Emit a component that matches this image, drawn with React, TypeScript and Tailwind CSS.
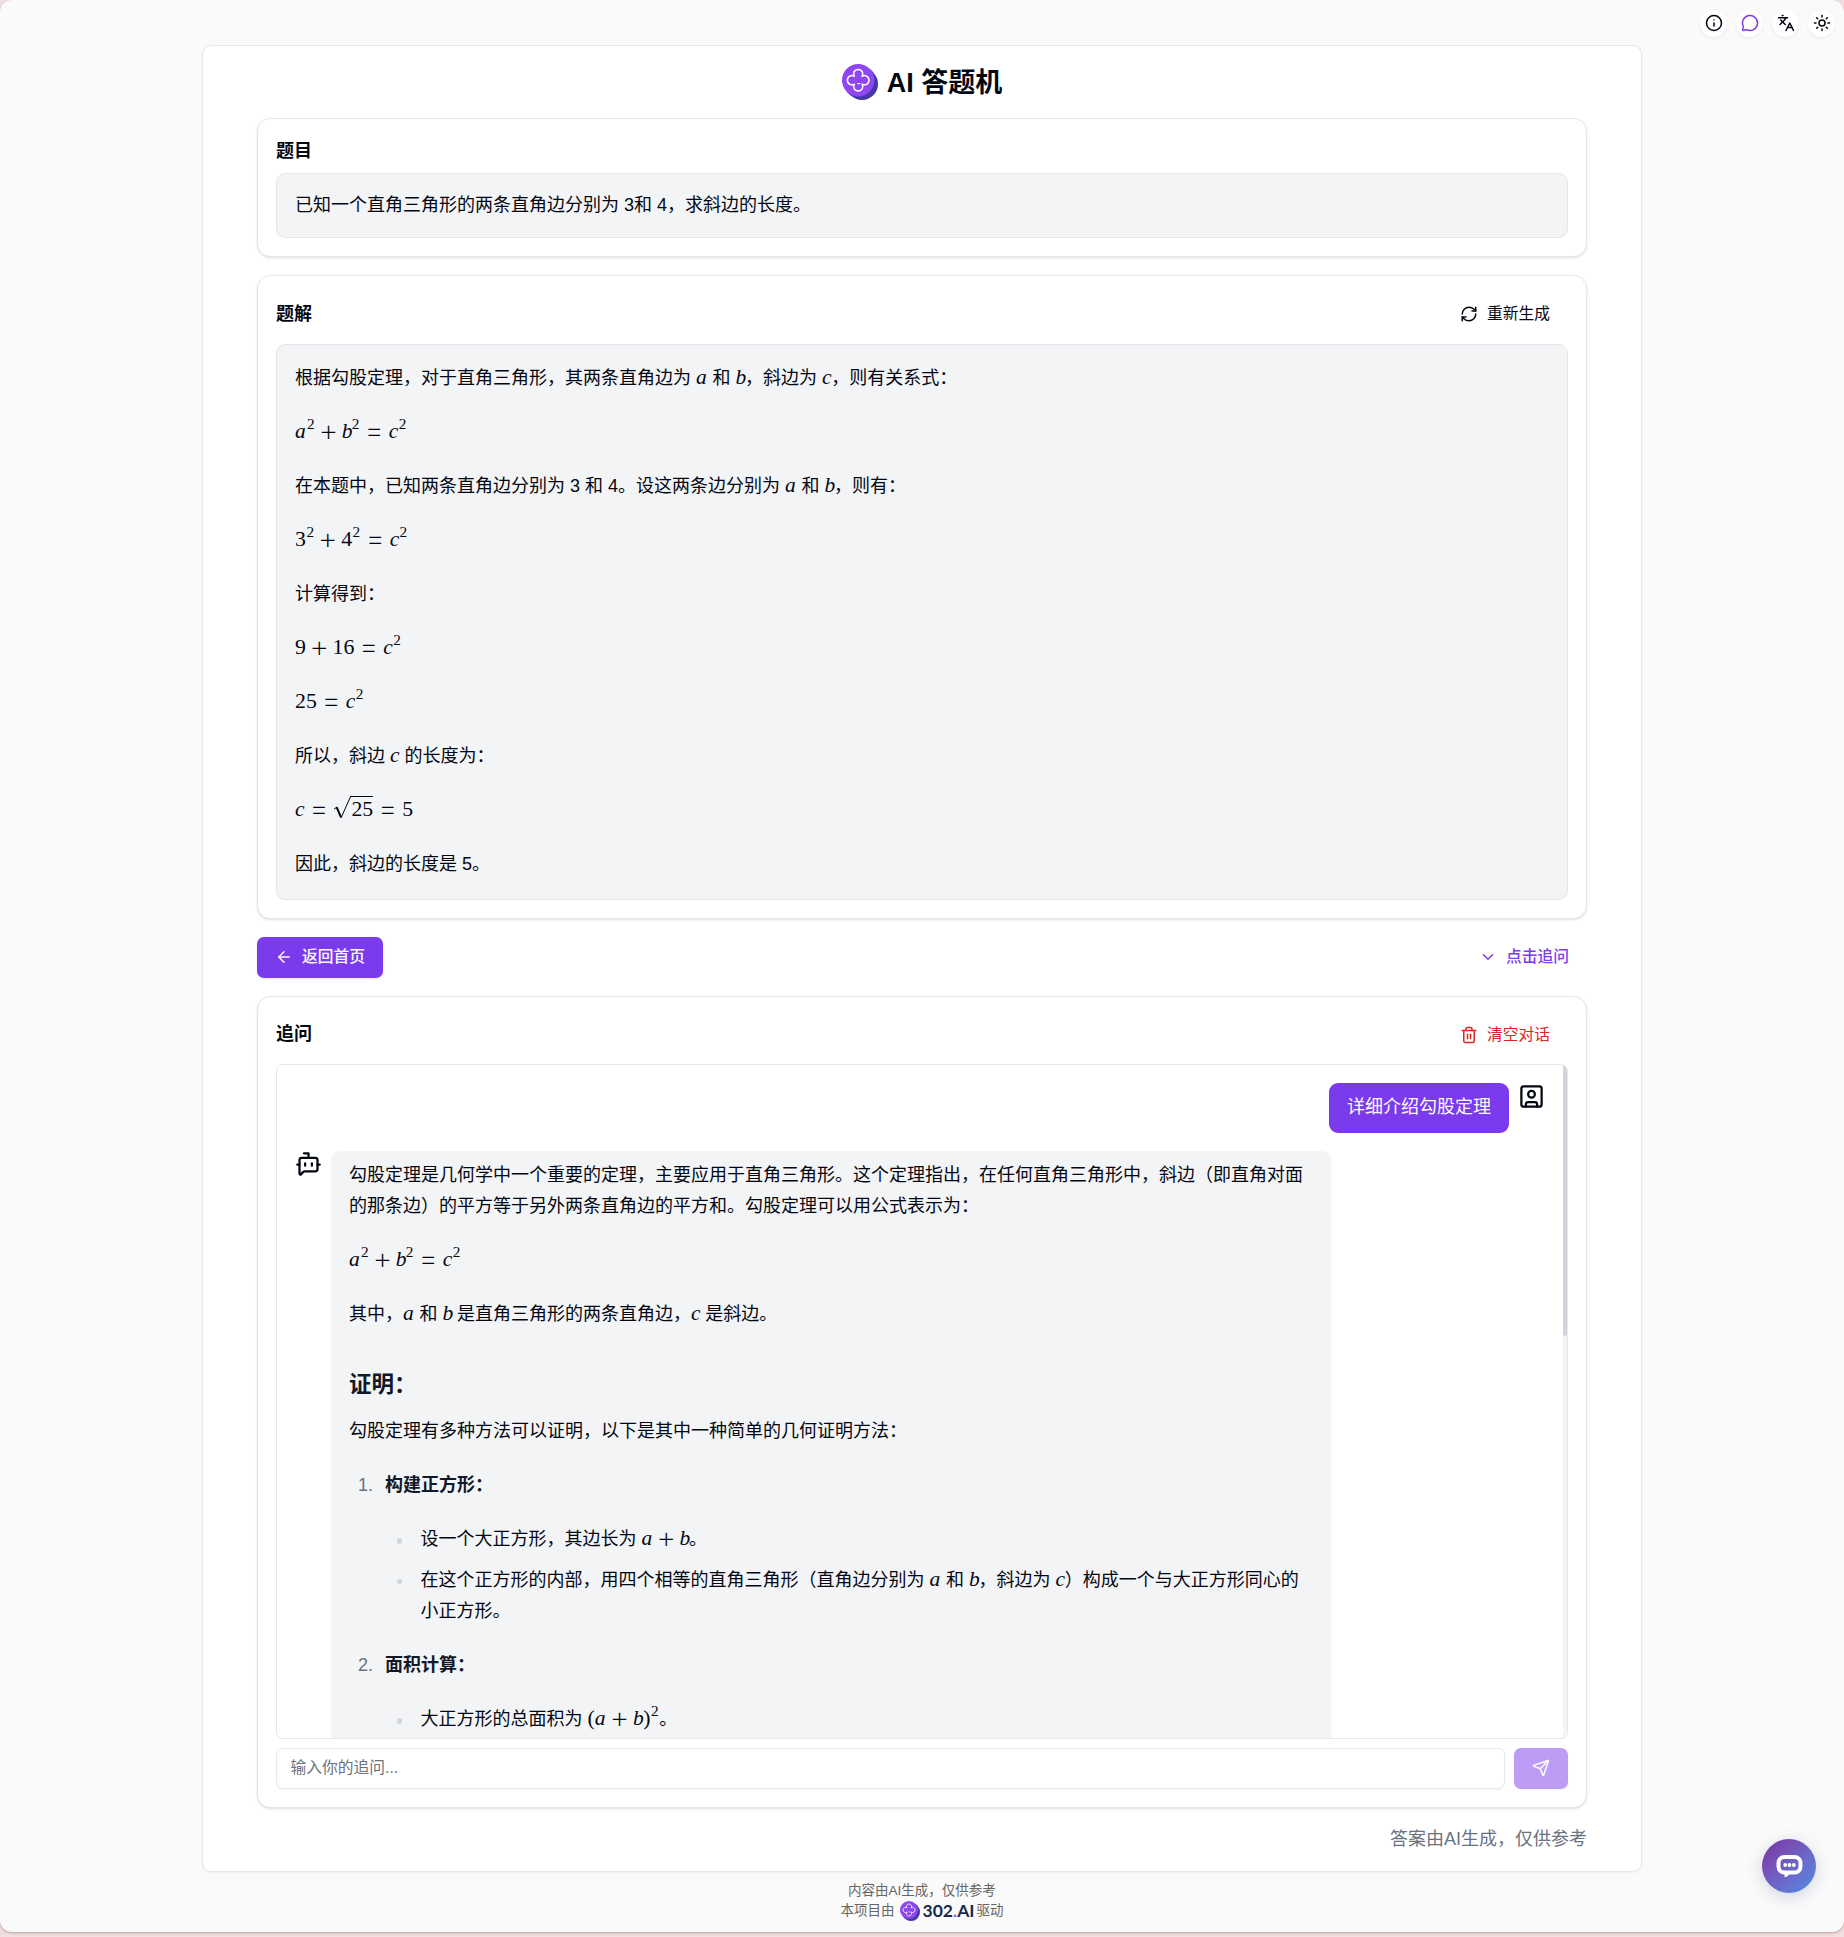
import React from "react";
import {
  ArrowLeft,
  BotMessageSquare,
  ChevronDown,
  Info,
  Languages,
  MessageCircle,
  RefreshCw,
  Send,
  SquareUser,
  Sun,
  Trash2,
} from "lucide-react";

/* ---------- math ---------- */

function V({ n }: { n: "a" | "b" | "c" }) {
  const w = n === "a" ? "w-[11.5px]" : "w-[9.4px]";
  return (
    <span className={`${w} inline-block font-['Liberation_Serif',serif] text-[21.5px] leading-[0] italic`}>{n}</span>
  );
}

function N({ children }: { children: React.ReactNode }) {
  return <span className="font-['Liberation_Serif',serif] text-[21.8px] leading-[0]">{children}</span>;
}

function Sq() {
  return (
    <span className="mr-[0.5px] ml-[0.5px] inline-block align-[9px] font-['Liberation_Serif',serif] text-[15.3px] leading-[0]">
      2
    </span>
  );
}

function Plus() {
  return (
    <span className="mx-[4.8px] inline-flex w-[17px] justify-center align-[-3px] font-['Inter',sans-serif] text-[31px] leading-[0] font-extralight">
      +
    </span>
  );
}

function Eq() {
  return (
    <span className="mx-[6px] inline-flex w-[17px] justify-center align-[-3px] font-['Inter',sans-serif] text-[31px] leading-[0] font-extralight">
      =
    </span>
  );
}

function Sqrt({ children }: { children: React.ReactNode }) {
  return (
    <>
      <svg className="inline-block h-[23px] w-[18px] align-[-3px]" viewBox="0 0 18 23" fill="none" stroke="currentColor">
        <path d="M1 13.2 4 11" strokeWidth="1" />
        <path d="M3.6 11.2 8 21.4" strokeWidth="2" />
        <path d="M8 22 17.8 0" strokeWidth="1" />
      </svg>
      <span className="border-t border-current font-['Liberation_Serif',serif] text-[21.8px] leading-[0]">{children}</span>
    </>
  );
}

function Pythagoras() {
  return (
    <>
      <V n="a" />
      <Sq />
      <Plus />
      <V n="b" />
      <Sq />
      <Eq />
      <V n="c" />
      <Sq />
    </>
  );
}

/* ---------- brand ---------- */

function Logo({ className }: { className: string }) {
  return (
    <svg className={className} viewBox="0 0 36 36" fill="none">
      <circle cx="20" cy="20" r="16" fill="#4338a8" />
      <path d="M5 28 28 5l3.5 3.5-23 23z" fill="#4338a8" />
      <circle cx="16.2" cy="16.2" r="16.2" fill="#8f45f2" />
      <path
        d="M12.6 12.6C10.2 9.6 12.4 5.4 16.2 5.4S22.2 9.6 19.8 12.6C22.8 10.2 27 12.4 27 16.2S22.8 22.2 19.8 19.8C22.2 22.8 20 27 16.2 27S10.2 22.8 12.6 19.8C9.6 22.2 5.4 20 5.4 16.2S9.6 10.2 12.6 12.6z"
        stroke="#fff"
        strokeWidth="1.5"
      />
      <path d="M15.8 19.6h2" stroke="#fff" strokeWidth="1.3" strokeLinecap="round" />
    </svg>
  );
}

/* ---------- pieces ---------- */

function Card({ children }: { children: React.ReactNode }) {
  return (
    <section className="rounded-[13.5px] border border-[#e5e7eb] bg-white p-4 shadow-[0_1px_3px_rgba(0,0,0,0.1),0_1px_2px_-1px_rgba(0,0,0,0.1)]">
      {children}
    </section>
  );
}

function RoundButton({ children }: { children: React.ReactNode }) {
  return (
    <button className="flex size-6 items-center justify-center rounded-full bg-white shadow-[0_1px_3px_rgba(0,0,0,0.07)]">
      {children}
    </button>
  );
}

function Dot({ children }: { children: React.ReactNode }) {
  return (
    <li className="flex">
      <span className="mt-[14px] mr-[18.5px] ml-[11.5px] size-[5.5px] shrink-0 rounded-full bg-[#d1d5db]" />
      <div>{children}</div>
    </li>
  );
}

function Step({ n, title, children }: { n: number; title: string; children: React.ReactNode }) {
  return (
    <li className="flex flex-col gap-[22.5px]">
      <div className="flex">
        <span className="w-[36px] pr-[12px] text-right text-[#6b7280]">{n}.</span>
        <strong className="font-bold text-[#111827]">{title}</strong>
      </div>
      <ul className="flex flex-col gap-2 pl-[36px]">{children}</ul>
    </li>
  );
}

export default function App() {
  return (
    <div
      className="h-[1937px] bg-[#f0e1e0] font-['Liberation_Sans','Noto_Sans_CJK_SC',sans-serif] text-[18px] leading-[27px] text-[#030712] [--spacing:4.5px]"
      lang="zh-CN"
    >
      <div className="relative flex h-[1932px] flex-col items-center rounded-[12px] bg-[#fafafa] pt-[45px] shadow-[0_1px_3px_rgba(80,0,0,0.3)]">
        <nav className="absolute top-[9.5px] right-[9px] flex gap-2">
          <RoundButton>
            <Info className="size-4" />
          </RoundButton>
          <RoundButton>
            <MessageCircle className="size-4 text-[#7c3aed]" />
          </RoundButton>
          <RoundButton>
            <Languages className="size-4" />
          </RoundButton>
          <RoundButton>
            <Sun className="size-4" />
          </RoundButton>
        </nav>

        <main className="flex w-[1440px] flex-col gap-4 rounded-[9px] border border-[#e5e7eb] bg-white px-12 py-4 shadow-[0_1px_2px_rgba(0,0,0,0.05)]">
          <header className="flex h-8 items-center justify-center gap-2">
            <Logo className="size-8" />
            <h1 className="pt-[2px] text-[27px] leading-[36px] font-bold">AI 答题机</h1>
          </header>

          <Card>
            <h2 className="mb-[8px] pt-px font-bold">题目</h2>
            <div className="rounded-[9px] border border-[#e5e7eb] bg-[#f3f4f6] p-4">
              已知一个直角三角形的两条直角边分别为 3和 4，求斜边的长度。
            </div>
          </Card>

          <Card>
            <div className="mb-2 flex h-9 items-center justify-between">
              <h2 className="font-bold">题解</h2>
              <button className="flex items-center gap-2 px-4 text-[15.75px]">
                <RefreshCw className="size-4" />
                <span className="pb-[2px]">重新生成</span>
              </button>
            </div>
            <div className="flex flex-col gap-[22.5px] rounded-[9px] border border-[#e5e7eb] bg-[#f3f4f6] px-4 py-[18.5px] leading-[31.5px] *:h-[31.5px]">
              <p>
                根据勾股定理，对于直角三角形，其两条直角边为 <V n="a" /> 和 <V n="b" />，斜边为 <V n="c" />，则有关系式：
              </p>
              <p>
                <Pythagoras />
              </p>
              <p>
                在本题中，已知两条直角边分别为 3 和 4。设这两条边分别为 <V n="a" /> 和 <V n="b" />，则有：
              </p>
              <p>
                <N>3</N>
                <Sq />
                <Plus />
                <N>4</N>
                <Sq />
                <Eq />
                <V n="c" />
                <Sq />
              </p>
              <p>计算得到：</p>
              <p>
                <N>9</N>
                <Plus />
                <N>16</N>
                <Eq />
                <V n="c" />
                <Sq />
              </p>
              <p>
                <N>25</N>
                <Eq />
                <V n="c" />
                <Sq />
              </p>
              <p>
                所以，斜边 <V n="c" /> 的长度为：
              </p>
              <p>
                <V n="c" />
                <Eq />
                <Sqrt>25</Sqrt>
                <Eq />
                <N>5</N>
              </p>
              <p>因此，斜边的长度是 5。</p>
            </div>
          </Card>

          <div className="flex h-9 items-center justify-between text-[15.75px] font-medium">
            <button className="flex h-9 items-center gap-2 rounded-[7px] bg-[#7c3aed] px-4 text-[#f9fafb] shadow-[0_1px_3px_rgba(0,0,0,0.1)]">
              <ArrowLeft className="size-4" />
              <span className="pb-[2px]">返回首页</span>
            </button>
            <button className="flex items-center gap-2 px-4 text-[#7c3aed]">
              <ChevronDown className="size-4" />
              <span className="pb-[2px]">点击追问</span>
            </button>
          </div>

          <Card>
            <div className="mb-2 flex h-9 items-center justify-between">
              <h2 className="font-bold">追问</h2>
              <button className="flex items-center gap-2 px-4 text-[15.75px] text-[#dc2626]">
                <Trash2 className="size-4" />
                <span>清空对话</span>
              </button>
            </div>

            <div className="flex h-[675px] overflow-hidden rounded-[7px] border border-[#e5e7eb]">
              <div className="flex h-max grow flex-col gap-4 p-4 leading-[31.5px]">
                <div className="flex items-start justify-end gap-2">
                  <div className="rounded-[9px] bg-[#7c3aed] px-4 py-2 text-[#f9fafb]">详细介绍勾股定理</div>
                  <SquareUser className="size-6 shrink-0" />
                </div>
                <div className="flex items-start gap-2">
                  <BotMessageSquare className="size-6 shrink-0" />
                  <div className="flex w-[1000px] flex-col gap-[22.5px] rounded-[9px] bg-[#f3f4f6] px-4 py-2">
                    <p>
                      勾股定理是几何学中一个重要的定理，主要应用于直角三角形。这个定理指出，在任何直角三角形中，斜边（即直角对面的那条边）的平方等于另外两条直角边的平方和。勾股定理可以用公式表示为：
                    </p>
                    <p className="h-[31.5px]">
                      <Pythagoras />
                    </p>
                    <p className="h-[31.5px]">
                      其中，<V n="a" /> 和 <V n="b" /> 是直角三角形的两条直角边，<V n="c" /> 是斜边。
                    </p>
                    <h3 className="mt-[13.5px] -mb-[9px] text-[22.5px] leading-[36px] font-bold text-[#111827]">证明：</h3>
                    <p>勾股定理有多种方法可以证明，以下是其中一种简单的几何证明方法：</p>
                    <ol className="flex flex-col gap-[22.5px]">
                      <Step n={1} title="构建正方形：">
                        <Dot>
                          设一个大正方形，其边长为 <V n="a" />
                          <Plus />
                          <V n="b" />。
                        </Dot>
                        <Dot>
                          在这个正方形的内部，用四个相等的直角三角形（直角边分别为 <V n="a" /> 和 <V n="b" />，斜边为{" "}
                          <V n="c" />）构成一个与大正方形同心的小正方形。
                        </Dot>
                      </Step>
                      <Step n={2} title="面积计算：">
                        <Dot>
                          大正方形的总面积为 <N>(</N>
                          <V n="a" />
                          <Plus />
                          <V n="b" />
                          <span className="ml-px">
                            <N>)</N>
                          </span>
                          <Sq />。
                        </Dot>
                      </Step>
                    </ol>
                  </div>
                </div>
              </div>
              <div className="w-[4px] shrink-0 bg-[#f3f4f6]">
                <div className="h-[271px] rounded-full bg-[#d1d5db]" />
              </div>
            </div>

            <div className="mt-2 flex h-9 gap-2">
              <input
                className="h-9 grow rounded-[7px] border border-[#e5e7eb] px-3 text-[15.75px] shadow-[0_1px_2px_rgba(0,0,0,0.05)] placeholder:text-[#6b7280]"
                placeholder="输入你的追问..."
              />
              <button className="flex h-9 w-12 items-center justify-center rounded-[7px] bg-[#bd9cf6] text-white shadow-[0_1px_2px_rgba(0,0,0,0.05)]">
                <Send className="size-4" />
              </button>
            </div>
          </Card>

          <p className="text-right text-[#6b7280]">答案由AI生成，仅供参考</p>
        </main>

        <footer className="mt-2 flex flex-col items-center text-[13.5px] leading-[20px] text-[#666]">
          <p>内容由AI生成，仅供参考</p>
          <p className="flex items-center">
            本项目由
            <Logo className="mr-[3px] ml-[5px] size-[20px]" />
            <span className="mr-[2px] font-['Lato',sans-serif] text-[17.5px] font-bold text-[#17294f]">
              302<span className="text-[#b14cf5]">.</span>AI
            </span>
            驱动
          </p>
        </footer>

        <button className="absolute right-[28px] bottom-[39px] flex size-12 items-center justify-center rounded-full bg-linear-to-br from-[#7b2fa0] to-[#4b8ce8] shadow-[0_4px_16px_rgba(60,80,140,0.22)]">
          <svg className="h-[22px] w-[27px]" viewBox="0 0 27 22" fill="none">
            <rect x="2.5" y="2" width="22" height="15.5" rx="6" stroke="#fff" strokeWidth="4" />
            <path d="M8.5 18h6l-4 4h-2z" fill="#fff" />
            <circle cx="9.2" cy="10" r="1.9" fill="#fff" />
            <circle cx="13.5" cy="10" r="1.9" fill="#fff" />
            <circle cx="17.8" cy="10" r="1.9" fill="#fff" />
          </svg>
        </button>
      </div>
    </div>
  );
}
